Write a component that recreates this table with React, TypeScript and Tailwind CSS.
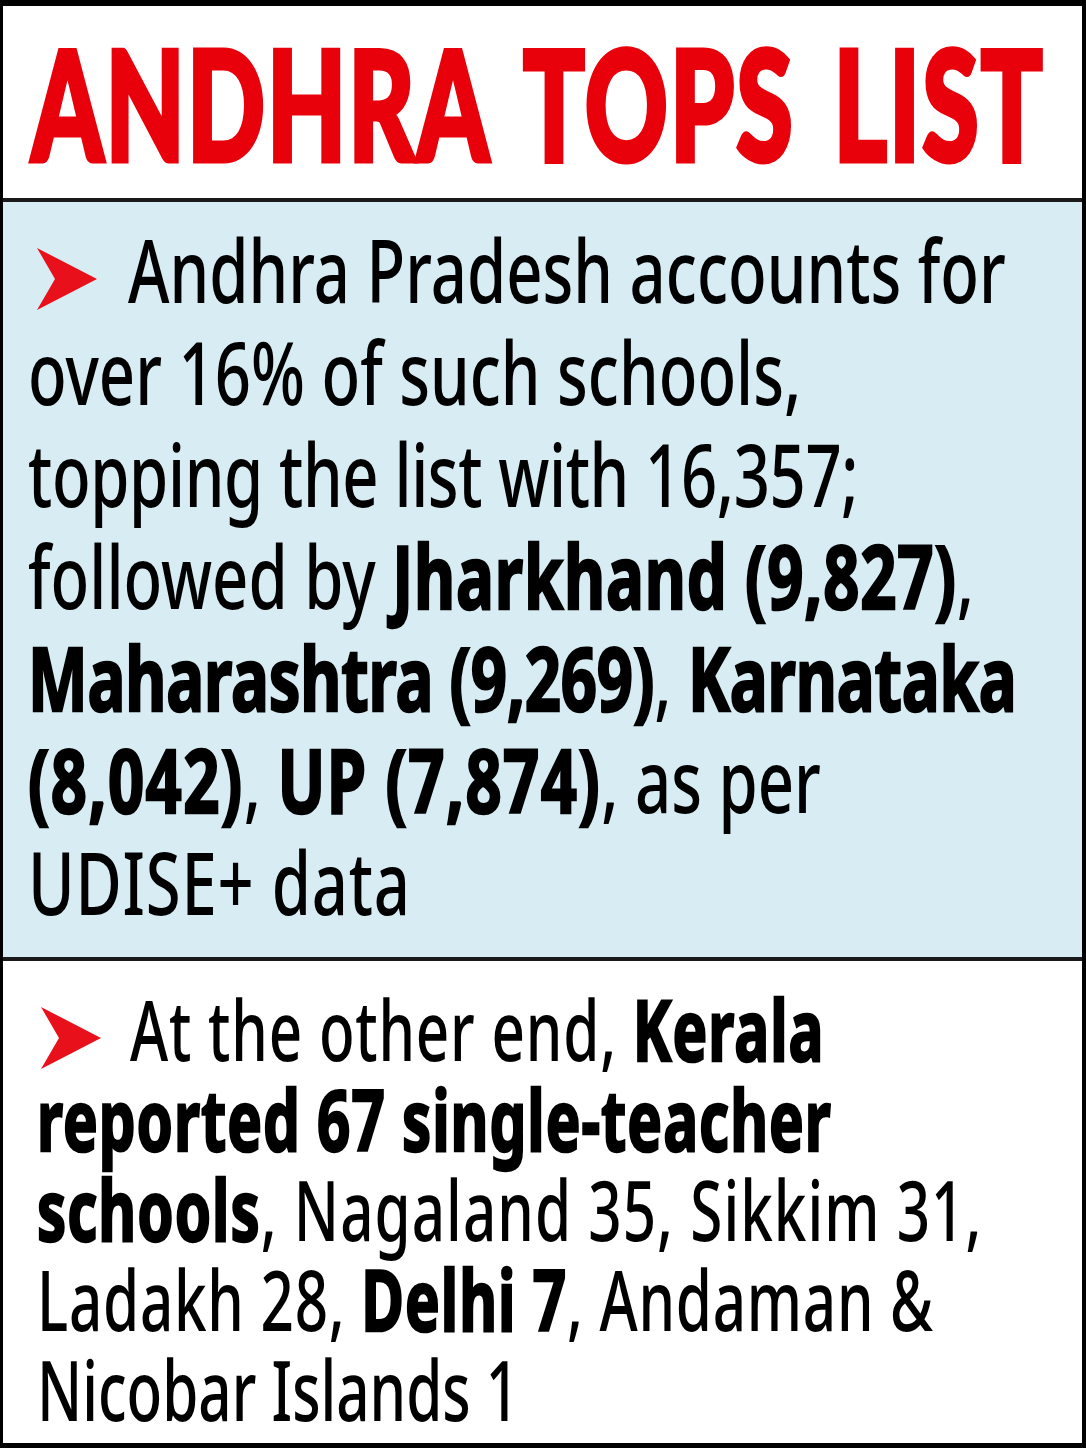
import React from "react";

const Arrow = ({ className = "" }: { className?: string }) => (
  <svg
    viewBox="0 0 60 62"
    width="60"
    height="62"
    className={"inline-block shrink-0 " + className}
  >
    <path d="M0 0 L60 31 L0 62 L18 31 Z" fill="#e8101a" />
  </svg>
);

const B = ({
  children,
  t = "tracking-[0.008em]",
}: {
  children: React.ReactNode;
  t?: string;
}) => (
  <span className={"font-bold [-webkit-text-stroke:2.5px_#000] " + t}>
    {children}
  </span>
);

const Line = ({
  children,
  scale = "scale-x-[0.72]",
  t = "",
}: {
  children: React.ReactNode;
  scale?: string;
  t?: string;
}) => (
  <span
    className={"inline-block whitespace-nowrap origin-left " + scale + " " + t}
  >
    {children}
  </span>
);

const L2 = ({ children, t = "" }: { children: React.ReactNode; t?: string }) => (
  <Line scale="scale-x-[0.694]" t={t}>
    {children}
  </Line>
);

export default function App() {
  return (
    <div
      className="w-[1086px] h-[1448px] overflow-hidden bg-white border-black border-t-[6px] border-l-[3px] border-r-[4px] border-b-[5px] flex flex-col text-black"
      style={{ fontFamily: '"Noto Sans", "Open Sans", sans-serif' }}
    >
      <div className="h-[196px] shrink-0 border-b-[4px] border-[#1a1a1a] flex items-center justify-center overflow-hidden pr-[8px]">
        <span
          className="inline-block shrink-0 whitespace-nowrap origin-center scale-x-[0.67] text-[153px] leading-none font-black tracking-[0.02em] [word-spacing:0.12em] text-[#e8000b] [-webkit-text-stroke:5px_#e8000b]"
          style={{ fontFamily: 'Lato, "Liberation Sans", sans-serif' }}
        >
          ANDHRA TOPS LIST
        </span>
      </div>

      <div className="h-[759px] shrink-0 overflow-hidden bg-[#d7ecf3] border-b-[4px] border-[#1a1a1a] pl-[25px] pt-[16px] text-[88px] leading-[102px] font-medium">
        <div className="whitespace-nowrap">
          <Arrow className="ml-[9px] mr-[31px]" />
          <Line>Andhra Pradesh accounts for</Line>
        </div>
        <div>
          <Line>over 16% of such schools,</Line>
        </div>
        <div>
          <Line t="tracking-[-0.006em]">topping the list with 16,357;</Line>
        </div>
        <div>
          <Line>
            followed by <B t="tracking-[0.013em]">Jharkhand (9,827)</B>,
          </Line>
        </div>
        <div>
          <Line>
            <B t="tracking-[-0.003em]">Maharashtra (9,269)</B>,{" "}
            <B t="tracking-[-0.003em]">Karnataka</B>
          </Line>
        </div>
        <div>
          <Line>
            <B t="tracking-[0.022em]">(8,042)</B>,{" "}
            <B t="tracking-[0.022em]">UP (7,874)</B>, as per
          </Line>
        </div>
        <div>
          <Line t="tracking-[0.012em]">UDISE+ data</Line>
        </div>
      </div>

      <div className="flex-1 overflow-hidden bg-white pl-[34px] pt-[23px] text-[84px] leading-[90px] font-medium">
        <div className="whitespace-nowrap">
          <Arrow className="ml-[4px] mr-[29px]" />
          <L2 t="tracking-[0.014em]">
            At the other end, <B t="tracking-[0.017em]">Kerala</B>
          </L2>
        </div>
        <div>
          <L2>
            <B t="tracking-[0.017em]">reported 67 single-teacher</B>
          </L2>
        </div>
        <div>
          <L2 t="tracking-[0.018em]">
            <B t="tracking-[0.017em]">schools</B>, Nagaland 35, Sikkim 31,
          </L2>
        </div>
        <div>
          <L2 t="tracking-[0.013em]">
            Ladakh 28, <B t="tracking-[0.017em]">Delhi 7</B>, Andaman &amp;
          </L2>
        </div>
        <div>
          <L2>Nicobar Islands 1</L2>
        </div>
      </div>
    </div>
  );
}
